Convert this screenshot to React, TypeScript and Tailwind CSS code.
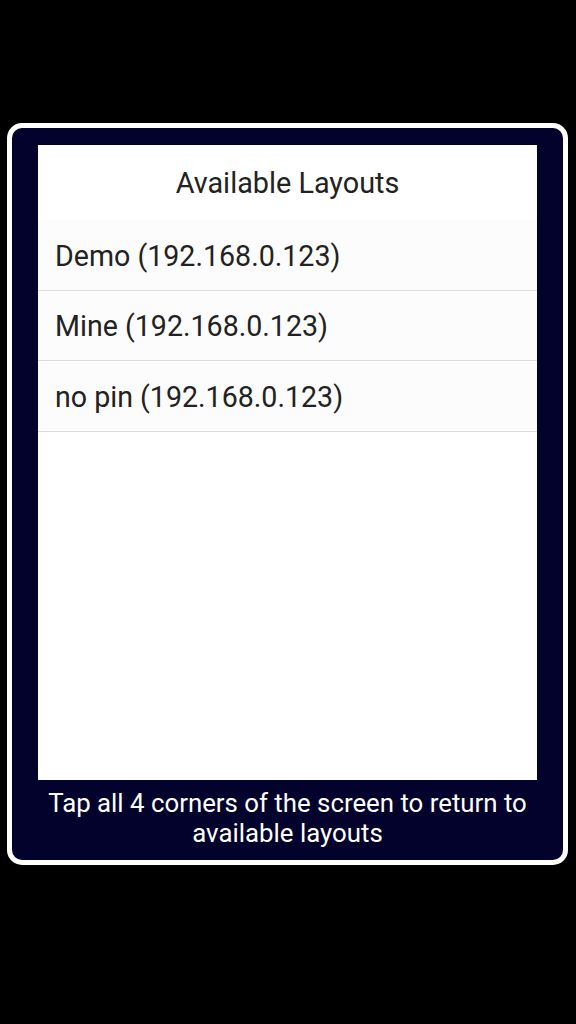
const layouts = ["Demo (192.168.0.123)", "Mine (192.168.0.123)", "no pin (192.168.0.123)"];

export default function App() {
  return (
    <div className="min-h-[1024px] bg-black pl-[7px] pt-[123px] font-['Roboto',sans-serif]">
      <div className="flex h-[742px] w-[561px] flex-col rounded-[15px] border-[5px] border-white bg-[#02022c] px-[26px] pt-[17px]">
        <div className="h-[635px] bg-white">
          <div className="flex h-[75px] items-center justify-center pt-[3px] text-[28.8px] text-[#222]">
            Available Layouts
          </div>
          {layouts.map((name) => (
            <div
              key={name}
              className="flex h-[70.5px] items-center border-b-[1.5px] border-[#dcdcdc] bg-[#fcfcfc] pl-[17px] pt-[3px] text-[28.6px] text-[#222]"
            >
              {name}
            </div>
          ))}
        </div>
        <div className="pt-[8px] text-center text-[25.8px] leading-[30px] text-white">
          Tap all 4 corners of the screen to return to available layouts
        </div>
      </div>
    </div>
  );
}
